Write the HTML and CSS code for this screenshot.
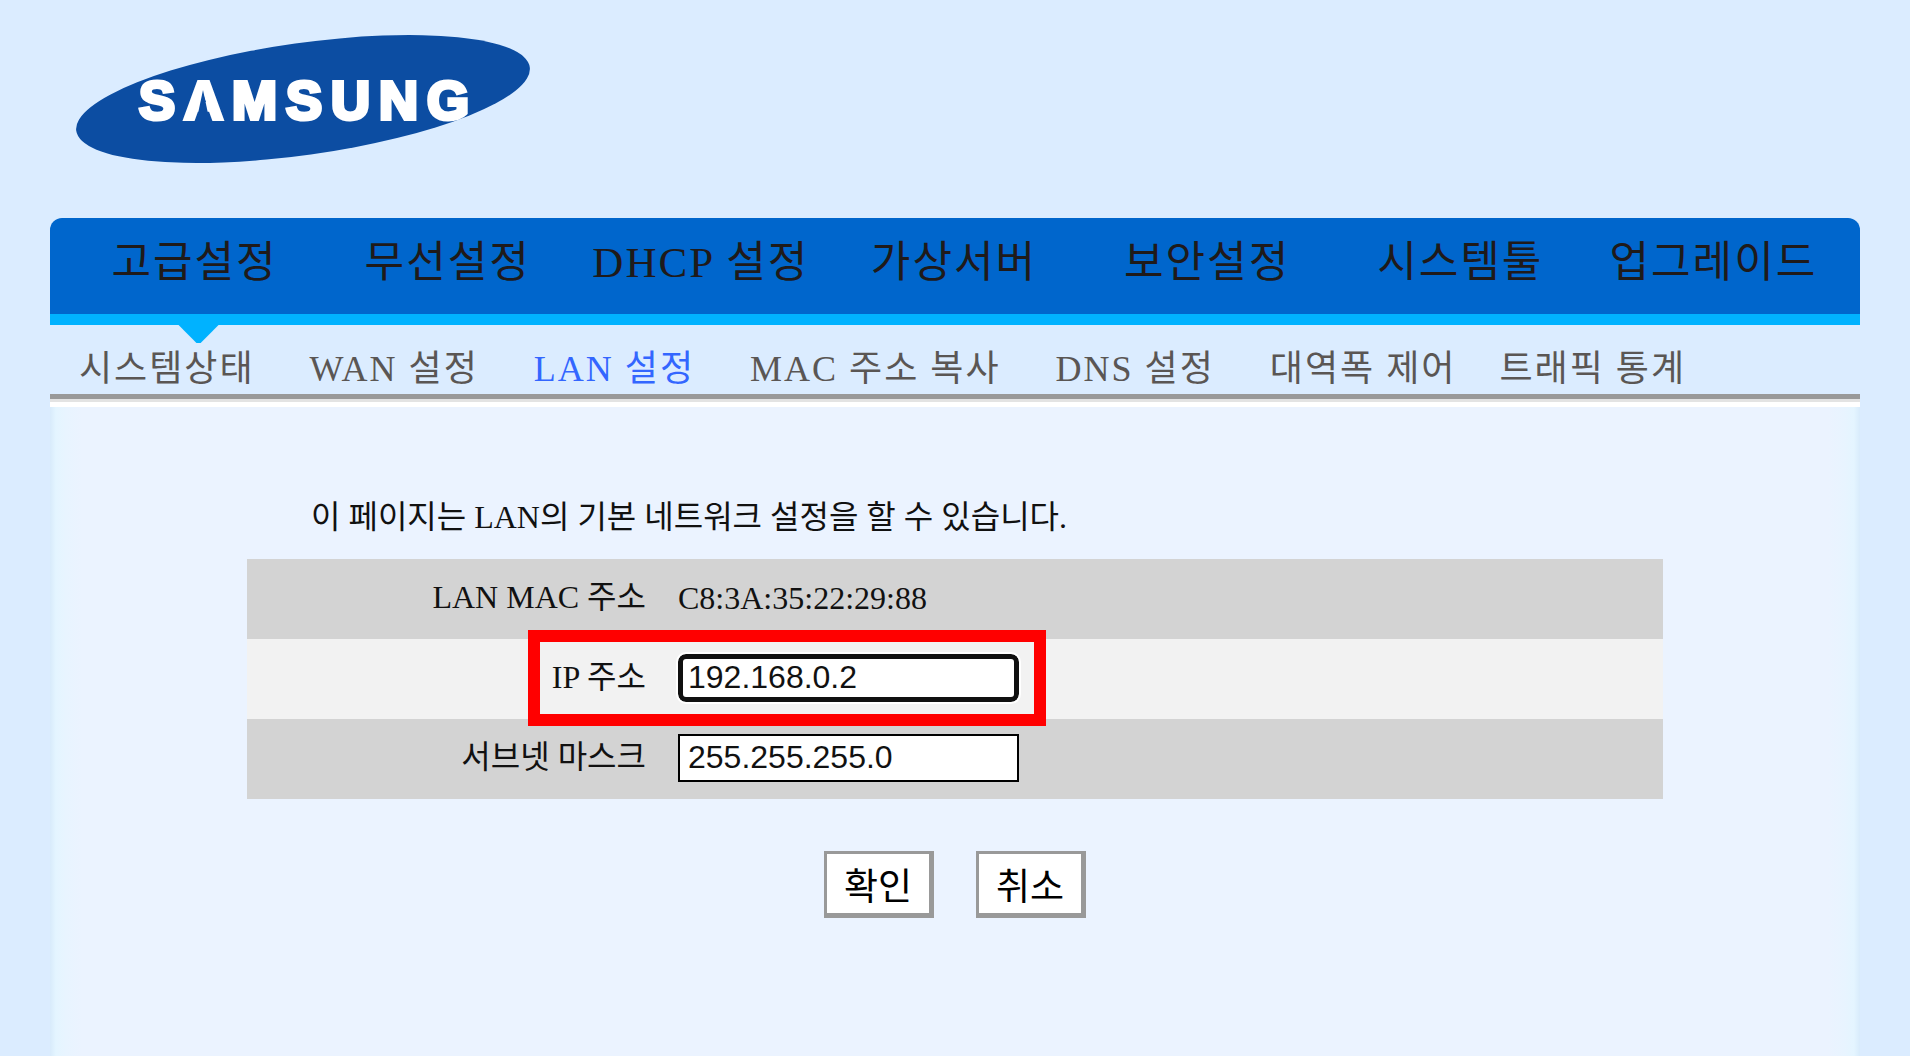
FILE: index.html
```
<!DOCTYPE html>
<html lang="ko">
  <head>
    <meta charset="utf-8">
    <title>LAN 설정</title>
    <link rel="stylesheet" href="styles.css">
  </head>
  <body>
    <div class="container">
      <header class="header">
        <svg class="logo" viewBox="0 0 460 132" role="img" aria-label="SAMSUNG">
          <ellipse cx="230" cy="66" rx="229" ry="56" transform="rotate(-8 230 66)" fill="#0c4da2" />
          <text class="logo-text" x="66" y="86">SAMSUNG</text>
          <!-- the A has no crossbar -->
          <path d="M130 57 L137 90 H123 Z" fill="#0c4da2" />
        </svg>
      </header>

      <nav class="menu">
        <ul>
          <li class="active"><a href="#">고급설정</a></li>
          <li><a href="#">무선설정</a></li>
          <li><a href="#">DHCP 설정</a></li>
          <li><a href="#">가상서버</a></li>
          <li><a href="#">보안설정</a></li>
          <li><a href="#">시스템툴</a></li>
          <li><a href="#">업그레이드</a></li>
        </ul>
      </nav>

      <nav class="submenu">
        <ul>
          <li><a href="#">시스템상태</a></li>
          <li><a href="#">WAN 설정</a></li>
          <li><a href="#" class="current">LAN 설정</a></li>
          <li><a href="#">MAC 주소 복사</a></li>
          <li><a href="#">DNS 설정</a></li>
          <li><a href="#">대역폭 제어</a></li>
          <li><a href="#">트래픽 통계</a></li>
        </ul>
      </nav>

      <main class="content">
        <form>
          <p class="intro">이 페이지는 LAN의 기본 네트워크 설정을 할 수 있습니다.</p>
          <table class="settings">
            <tr>
              <th>LAN MAC 주소</th>
              <td>C8:3A:35:22:29:88</td>
            </tr>
            <tr class="light">
              <th><label for="lanIp">IP 주소</label></th>
              <td>
                <div class="marked">
                  <input type="text" id="lanIp" class="focused" value="192.168.0.2">
                </div>
              </td>
            </tr>
            <tr>
              <th><label for="lanMask">서브넷 마스크</label></th>
              <td><input type="text" id="lanMask" value="255.255.255.0"></td>
            </tr>
          </table>
          <div class="buttons">
            <button type="submit" class="btn">확인</button>
            <button type="reset" class="btn">취소</button>
          </div>
        </form>
      </main>
    </div>
  </body>
</html>
```
FILE: styles.css
```
* {
  box-sizing: border-box;
}
body {
  margin: 0;
  background: #dbecff;
  color: #111;
  font-family: "Liberation Serif", "Noto Sans CJK KR", serif;
  font-size: 32px;
  line-height: 40px;
}
.container {
  display: flex;
  flex-direction: column;
  min-height: 100vh;
  margin: 0 50px;
}
ul {
  display: flex;
  margin: 0;
  padding: 0;
  list-style: none;
}
a {
  color: inherit;
  text-decoration: none;
}

/* logo */
.header {
  height: 218px;
  padding: 33px 23px 0;
}
.logo {
  display: block;
  width: 460px;
  height: 132px;
}
.logo-text {
  fill: #fff;
  stroke: #fff;
  stroke-width: 4px;
  font-family: "Liberation Sans", Arial, sans-serif;
  font-size: 54px;
  font-weight: bold;
  letter-spacing: 9px;
}

/* main menu */
.menu {
  height: 107px;
  padding: 0 20px 0 18px;
  background: #0066cc;
  border-bottom: 11px solid #00b2ff;
  border-radius: 12px 12px 0 0;
}
.menu li {
  position: relative;
  flex: 1 1 0;
  height: 96px;
  color: #1f1a1a;
  font-size: 43px;
  line-height: 90px;
  letter-spacing: 2px;
  text-align: center;
  white-space: nowrap;
}
.menu .active::after {
  content: "";
  position: absolute;
  top: 106px;
  left: 50%;
  width: 42px;
  height: 19px;
  margin-left: -17px;
  background: #00b2ff;
  clip-path: polygon(0 0, 100% 0, 55% 100%, 45% 100%);
}

/* sub menu */
.submenu {
  height: 82px;
  padding: 18px 29px 0;
  border-bottom: 5px solid #fff;
  box-shadow: inset 0 -3px #e3e3e3, inset 0 -8px #999;
}
.submenu li {
  margin-right: 55px;
  color: #5a5654;
  font-size: 36px;
  line-height: 52px;
  letter-spacing: 2px;
  white-space: nowrap;
}
.submenu li:nth-last-child(2) {
  margin-right: 43px;
}
.submenu .current {
  color: #3366ff;
}

/* settings */
.content {
  flex: 1;
  padding: 88px 197px 0;
  background: linear-gradient(to right, #d8ebfb, #e4f5ff 6px, #e8f4ff 16px, #ebf3ff 32px, #ebf3ff calc(100% - 32px), #e8f4ff calc(100% - 16px), #e4f5ff calc(100% - 6px), #d8ebfb);
}
.intro {
  margin: 0;
  padding: 0 64px 20px;
  line-height: 44px;
}
.settings {
  width: 100%;
  border-collapse: collapse;
  table-layout: fixed;
}
.settings tr {
  height: 80px;
  background: #d3d3d3;
}
.settings .light {
  background: #f2f2f2;
}
.settings th {
  width: 415px;
  padding: 0 16px 4px;
  font-weight: normal;
  text-align: right;
}
.settings td {
  padding: 0 16px 3px;
}
.settings input {
  display: block;
  width: 341px;
  height: 48px;
  padding: 0 8px;
  border: 2px solid #000;
  background: #fff;
  color: #111;
  font-family: "Liberation Sans", Arial, sans-serif;
  font-size: 32px;
}
.settings .focused {
  padding: 0 5px;
  border: 5px solid #101010;
  border-radius: 8px;
  outline: 2px solid #fff;
}
.marked {
  position: relative;
}
.marked::before {
  content: "";
  position: absolute;
  box-sizing: border-box;
  top: -24px;
  left: -150px;
  width: 518px;
  height: 96px;
  border: 12px solid #f00;
}
.buttons {
  display: flex;
  justify-content: center;
  gap: 42px;
  margin-top: 52px;
}
.btn {
  width: 110px;
  height: 67px;
  padding: 0;
  border: 3px solid #999;
  border-width: 3px 5px 5px 3px;
  background: #fff;
  color: #000;
  font-family: "Liberation Sans", "Noto Sans CJK KR", sans-serif;
  font-size: 37px;
}
```
